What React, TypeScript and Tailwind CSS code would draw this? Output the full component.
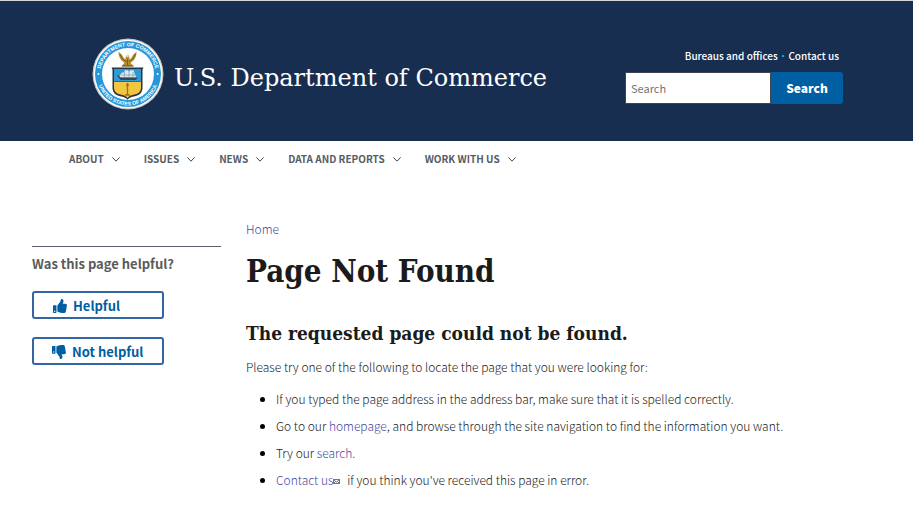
import type { ReactNode } from "react";
import { FaThumbsDown, FaThumbsUp } from "react-icons/fa";

const navItems = ["About", "Issues", "News", "Data and reports", "Work with us"];

function Seal() {
  return (
    <svg viewBox="0 0 72 72" className="size-[72px] shrink-0" aria-hidden="true">
      <defs>
        <path id="seal-top" d="M8.2 36a27.8 27.8 0 0 1 55.6 0" />
        <path id="seal-bottom" d="M4.6 36a31.4 31.4 0 0 0 62.8 0" />
      </defs>
      <circle cx="36" cy="36" r="35.5" fill="#c9c5b8" />
      <circle cx="36" cy="36" r="34.3" fill="#fff" />
      <circle cx="36" cy="36" r="33" fill="#2796d8" />
      <circle cx="36" cy="36" r="26" fill="#fff" />
      <g fill="#fff" fontFamily="Liberation Sans, sans-serif" fontWeight="700" fontSize="5.2">
        <text textAnchor="middle">
          <textPath href="#seal-top" startOffset="50%">DEPARTMENT OF COMMERCE</textPath>
        </text>
        <text textAnchor="middle">
          <textPath href="#seal-bottom" startOffset="50%">UNITED STATES OF AMERICA</textPath>
        </text>
      </g>
      <circle cx="6.4" cy="36" r="1" fill="#fff" />
      <circle cx="65.6" cy="36" r="1" fill="#fff" />
      {/* eagle */}
      <path d="M26.5 13.5c0 5.5 2 9 6 11L30 28h11l-2.500-3.500c4-2 6-5.500 6-11L41 17l-2 3.500-1.500.5-.5-3.500-1.500-1-1.500 1.500-.5 3-1.500-.5-2-3.500z" fill="#b88b2a" />
      <path d="M28 16l2.5 5 4 3M43.500 16l-2.500 5-4 3M35.500 21v6" stroke="#6b531f" strokeWidth=".8" fill="none" />
      <path d="M34.5 17h2v2h-2z" fill="#f2e7c3" />
      <path d="M30 28h11.500" stroke="#6b531b" strokeWidth="1.2" />
      {/* shield */}
      <path d="M19.5 29.500h32l-1 2V51q-1 6-7.500 7.200-5.500.8-7.500 3.600-2-2.800-7.500-3.600-6.500-1.200-7.500-7.200V31.500z" fill="#263647" />
      <path d="M22 31h27v12.500H22z" fill="#2f9ad6" />
      <path d="M22 44h27v6.500q-.8 5-6.500 6-5 .8-7 3.500-2-2.700-7-3.500-5.700-1-6.500-6z" fill="#f3c541" />
      {/* ship */}
      <path d="M26.500 39.500l3.500-5h2l1-2.300h3l1 1.300 1.500-1.300h3l1 3 2 4.300z" fill="#dfeaf0" />
      <path d="M25 37.500h2l1.500 2h17L44 42H28.500z" fill="#33495a" />
      <path d="M32.500 34v5.500M37 32.500v7M41 34v5.500M29 37h15" stroke="#6d8da2" strokeWidth=".6" />
      <path d="M35.5 45v12.500M33 57h5M34 47h3" stroke="#96741c" strokeWidth="1.3" />
    </svg>
  );
}

function Chevron() {
  return (
    <svg viewBox="0 0 8 5" className="h-[5px] w-2" fill="none" stroke="#3d4551" aria-hidden="true">
      <path d="M.4.4 4 4.2 7.6.4" />
    </svg>
  );
}

function TextLink({ href, children }: { href: string; children: ReactNode }) {
  return (
    <a href={href} className="text-[#4549a0] hover:underline">
      {children}
    </a>
  );
}

export default function App() {
  return (
    <div className="min-h-screen bg-white font-['Noto_Sans_CJK_JP','Noto_Sans',sans-serif] text-xs text-[#1b1b1b]">
      <header className="flex h-[141px] items-center justify-between border-t border-[#d6d7d9] bg-[#172e51] pt-[6px] pr-[70px] pl-[92px] text-white">
        <a href="#home" className="flex items-center gap-[10px]">
          <Seal />
          <span className="pt-2 font-['DejaVu_Serif',serif] text-2xl">U.S. Department of Commerce</span>
        </a>
        <div className="w-[218px] pt-1">
          <p className="mb-2 pr-1 text-right text-[10px] leading-4 font-medium">
            <a href="#bureaus">Bureaus and offices</a> <span className="font-black text-[#02bfe7]">·</span> <a href="#contact">Contact us</a>
          </p>
          <form className="flex h-8" role="search" onSubmit={(e) => e.preventDefault()}>
            <input
              type="search"
              aria-label="Search"
              placeholder="Search"
              className="min-w-0 flex-1 border border-[#3d4551] bg-white px-[5px] text-[11px] text-black placeholder:text-[#757575]"
            />
            <button type="submit" className="w-[72px] rounded-r-[3px] bg-[#005ea2] text-xs font-black">
              Search
            </button>
          </form>
        </div>
      </header>

      <nav className="flex gap-6 px-[69px] pt-[10px]" aria-label="Main">
        {navItems.map((item) => (
          <button key={item} type="button" className="flex items-center gap-2 text-[10px] leading-4 font-bold text-[#565c65] uppercase">
            {item}
            <Chevron />
          </button>
        ))}
      </nav>

      <div className="flex gap-[25px] px-8 pt-[53px]">
        <aside className="w-[189px] shrink-0 pt-[26px]">
          <div className="border-t border-[#5b616b] pt-[7px]">
            <h2 className="text-[13px] leading-5 font-bold text-[#5b5b5b]">Was this page helpful?</h2>
            <div className="mt-[17px] flex w-[132px] flex-col gap-[18px] text-[13px] font-bold text-[#005ea2]">
              <button type="button" className="flex h-7 items-center gap-[6px] rounded-[3px] border-2 border-[#3465a4] pt-px pl-[19px]">
                <FaThumbsUp className="size-[14px]" />
                Helpful
              </button>
              <button type="button" className="flex h-7 items-center gap-[6px] rounded-[3px] border-2 border-[#3465a4] pt-px pl-[18px]">
                <FaThumbsDown className="size-[14px]" />
                Not helpful
              </button>
            </div>
          </div>
        </aside>

        <main className="min-w-0 flex-1 font-light">
          <nav className="leading-[18px]" aria-label="Breadcrumb">
            <TextLink href="#home">Home</TextLink>
          </nav>
          <h1 className="mt-[13px] font-['DejaVu_Serif_Condensed','DejaVu_Serif',serif] text-[31px] leading-10 font-bold">
            Page Not Found
          </h1>
          <h2 className="mt-7 font-['DejaVu_Serif_Condensed','DejaVu_Serif',serif] text-[19px] leading-7 font-bold">
            The requested page could not be found.
          </h2>
          <p className="mt-[10px] leading-5">Please try one of the following to locate the page that you were looking for:</p>
          <ul className="mt-3 list-disc space-y-[7px] pl-[30px] leading-5 marker:text-black">
            <li>If you typed the page address in the address bar, make sure that it is spelled correctly.</li>
            <li>
              Go to our <TextLink href="#home">homepage</TextLink>, and browse through the site navigation to find the information you want.
            </li>
            <li>
              Try our <TextLink href="#search">search</TextLink>.
            </li>
            <li>
              <TextLink href="#contact">
                Contact us
                <svg viewBox="0 0 7 5" className="mr-1 inline h-[5px] w-[7px]" fill="none" stroke="#666" strokeWidth=".9" aria-hidden="true">
                  <path d="M.5.5h6v4h-6zM.5.5l3 2.5 3-2.5M.5 4.5l2-2M6.5 4.5l-2-2" />
                </svg>
              </TextLink>{" "}
              if you think you've received this page in error.
            </li>
          </ul>
        </main>
      </div>
    </div>
  );
}
